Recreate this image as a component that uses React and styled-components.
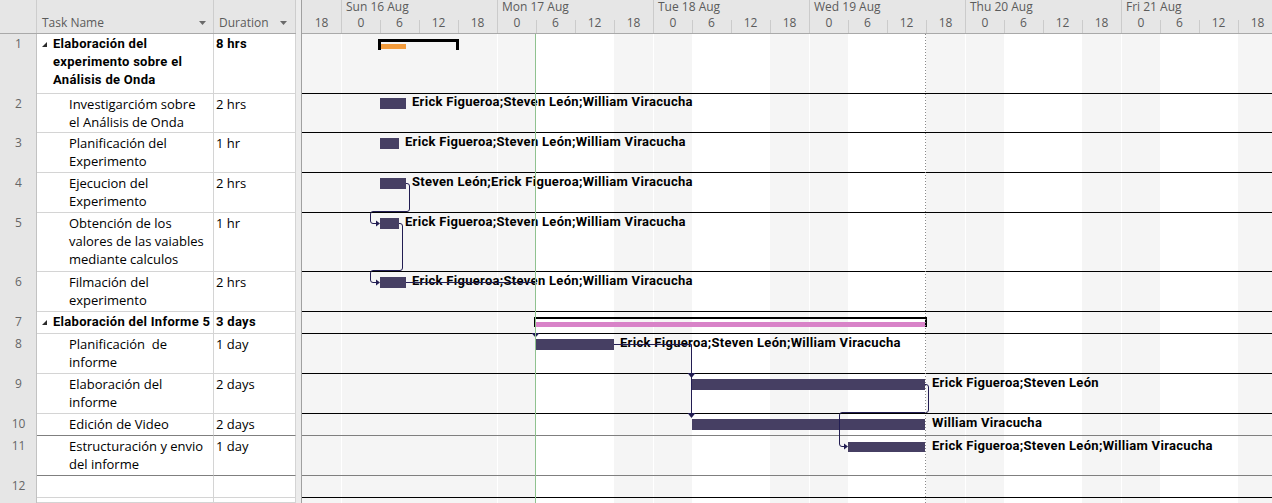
import React from 'react';
import styled, { createGlobalStyle, css } from 'styled-components';

const GlobalStyle = createGlobalStyle`
  html, body {
    margin: 0;
    padding: 0;
    background: #ffffff;
  }
  body {
    font-family: "Open Sans", "Noto Sans", sans-serif;
    font-size: 13px;
    color: #000;
    overflow: hidden;
  }
`;

const BAR = '#463f63';
const LINK = '#221d52';
const EVERYONE = 'Erick Figueroa;Steven León;William Viracucha';

const TASKS = [
  {
    n: 1, h: 60, summary: true, dur: '8 hrs',
    name: ['Elaboración del', 'experimento sobre el', 'Análisis de Onda'],
    bracket: { left: 76, top: 5, width: 81, height: 11, line: 3, fill: { top: 2, width: 25, color: '#f29b3c' } },
  },
  { n: 2, h: 39, dur: '2 hrs', name: ['Investigarcióm sobre', 'el Análisis de Onda'], bar: { left: 78, top: 4, width: 26 }, label: { text: EVERYONE, left: 110 } },
  { n: 3, h: 40, dur: '1 hr', name: ['Planificación del', 'Experimento'], bar: { left: 78, top: 5, width: 19 }, label: { text: EVERYONE, left: 103 } },
  { n: 4, h: 40, dur: '2 hrs', name: ['Ejecucion del', 'Experimento'], bar: { left: 78, top: 5, width: 26 }, label: { text: 'Steven León;Erick Figueroa;William Viracucha', left: 110 } },
  { n: 5, h: 59, dur: '1 hr', name: ['Obtención de los', 'valores de las vaiables', 'mediante calculos'], bar: { left: 78, top: 5, width: 19 }, label: { text: EVERYONE, left: 103 } },
  { n: 6, h: 40, dur: '2 hrs', name: ['Filmación del', 'experimento'], bar: { left: 78, top: 5, width: 26 }, label: { text: EVERYONE, left: 110 } },
  {
    n: 7, h: 22, summary: true, dur: '3 days',
    name: ['Elaboración del Informe 5'],
    bracket: { left: 232, top: 5, width: 393, height: 10, line: 2, fill: { top: 3, color: '#d883c8' } },
  },
  { n: 8, h: 40, dur: '1 day', name: ['Planificación  de', 'informe'], bar: { left: 234, top: 5, width: 78 }, label: { text: EVERYONE, left: 318 } },
  { n: 9, h: 40, dur: '2 days', name: ['Elaboración del', 'informe'], bar: { left: 389, top: 5, width: 234 }, label: { text: 'Erick Figueroa;Steven León', left: 630 } },
  { n: 10, h: 22, dur: '2 days', dark: true, name: ['Edición de Video'], bar: { left: 390, top: 5, width: 233 }, label: { text: 'William Viracucha', left: 630 } },
  { n: 11, h: 40, dur: '1 day', dark: true, name: ['Estructuración y envio', 'del informe'], bar: { left: 546, top: 6, width: 77, height: 10 }, label: { text: EVERYONE, left: 630 } },
  { n: 12, h: 22, dur: '', name: [] },
];

const DAYS = [
  { label: '', width: 39, edge: false },
  { label: 'Sun 16 Aug', width: 156, edge: true },
  { label: 'Mon 17 Aug', width: 156, edge: true },
  { label: 'Tue 18 Aug', width: 156, edge: true },
  { label: 'Wed 19 Aug', width: 156, edge: true },
  { label: 'Thu 20 Aug', width: 156, edge: true },
  { label: 'Fri 21 Aug', width: 156, edge: true },
];

const SLOTS = Array.from({ length: 25 }, (_, i) => {
  const hour = (18 + 6 * i) % 24;
  const day = Math.floor((i + 3) / 4);
  return { hour, dayStart: hour === 0, shaded: day <= 1 || hour === 0 || hour === 18 };
});

const Screen = styled.div`
  display: flex;
  width: 1272px;
  height: 503px;
  overflow: hidden;
`;

const Sheet = styled.div`
  width: 296px;
  flex: none;
  display: flex;
  flex-direction: column;
`;

const columns = css`
  display: grid;
  grid-template-columns: 37px 177px 82px;
`;

const HeadRow = styled.div`
  ${columns}
  height: 34px;
  box-sizing: border-box;
  background: #e6e6e6;
  border-bottom: 1px solid #a9a9a9;
`;

const HeadCell = styled.div`
  display: flex;
  align-items: center;
  justify-content: space-between;
  box-sizing: border-box;
  border-right: 1px solid #cdcdcd;
  padding: 13px ${(p) => p.$pr || 0}px 0 5px;
  font-size: 12px;
  color: #5b5b5b;
  line-height: 14px;
`;

const SortArrow = () => (
  <svg width="7" height="4" viewBox="0 0 7 4">
    <polygon points="0,0 7,0 3.5,4" fill="#6a6a6a" />
  </svg>
);

const BodyRow = styled.div`
  ${columns}
  height: ${(p) => p.$h}px;
  flex: ${(p) => (p.$fill ? 1 : 'none')};
`;

const NumCell = styled.div`
  background: #e6e6e6;
  border-right: 1px solid #c2c2c2;
  box-sizing: border-box;
  text-align: center;
  padding: 1px 0 0 1px;
  font-size: 12px;
  line-height: 18px;
  color: #666;
`;

const cellBase = css`
  box-sizing: border-box;
  border-bottom: 1px solid ${(p) => (p.$dark ? '#7f7f7f' : '#d4d4d4')};
  border-right: 1px solid #d4d4d4;
  padding-top: 1px;
  line-height: 18px;
  white-space: pre;
  overflow: hidden;
  ${(p) =>
    p.$bold &&
    css`
      font-family: Roboto, "Open Sans", sans-serif;
      font-weight: 700;
      letter-spacing: 0.3px;
    `}
`;

const NameCell = styled.div`
  ${cellBase}
  padding-left: ${(p) => (p.$bold ? 5 : 32)}px;
`;

const DurCell = styled.div`
  ${cellBase}
  padding-left: 2px;
`;

const Line = styled.div`
  display: flex;
  align-items: center;
`;

const Collapse = styled.svg`
  flex: none;
  margin: 1px 6px 0 0;
`;

const Splitter = styled.div`
  width: 6px;
  flex: none;
  box-sizing: border-box;
  background: #ececec;
  border-right: 1px solid #a0a0a0;
`;

const Gantt = styled.div`
  flex: 1;
  display: flex;
  flex-direction: column;
  overflow: hidden;
`;

const Timescale = styled.div`
  height: 34px;
  flex: none;
  box-sizing: border-box;
  background: #e6e6e6;
  border-bottom: 1px solid #a9a9a9;
  color: #5b5b5b;
  font-size: 12px;
  line-height: 14px;
  white-space: nowrap;
`;

const Tier = styled.div`
  display: flex;
  height: ${(p) => p.$h}px;
`;

const DayLabel = styled.div`
  flex: none;
  width: ${(p) => p.$w}px;
  box-sizing: border-box;
  padding-left: 4px;
  border-left: ${(p) => (p.$edge ? '1px solid #cbcbcb' : 'none')};
`;

const HourCell = styled.div`
  flex: none;
  width: 39px;
  box-sizing: border-box;
  position: relative;
  text-align: center;
  padding-top: 1px;
  border-left: ${(p) => (p.$dayStart ? '1px solid #cbcbcb' : 'none')};
  ${(p) =>
    !p.$dayStart &&
    !p.$first &&
    css`
      &::before {
        content: '';
        position: absolute;
        left: 0;
        top: 5px;
        bottom: 0;
        width: 1px;
        background: #cbcbcb;
      }
    `}
`;

const Chart = styled.div`
  flex: 1;
  position: relative;
  display: flex;
  flex-direction: column;
`;

const Shading = styled.div`
  position: absolute;
  inset: 0;
  display: flex;
  z-index: 0;
`;

const ShadeCol = styled.div`
  flex: none;
  width: 39px;
  box-sizing: border-box;
  background: ${(p) => (p.$shaded ? '#f5f5f5' : '#ffffff')};
  border-left: ${(p) => (p.$dayStart ? '1px solid #ffffff' : 'none')};
`;

const ChartRow = styled.div`
  position: relative;
  z-index: 1;
  box-sizing: border-box;
  height: ${(p) => p.$h}px;
  flex: ${(p) => (p.$fill ? 1 : 'none')};
  border-bottom: ${(p) => (p.$fill ? 'none' : `1px solid ${p.$dark ? '#7f7f7f' : '#000'}`)};
`;

const TaskBar = styled.div`
  position: absolute;
  background: ${BAR};
`;

const Bracket = styled.div`
  position: absolute;
  box-sizing: border-box;
  border: ${(p) => p.$line}px solid #000;
  border-bottom: none;
`;

const Progress = styled.div`
  position: absolute;
  left: 0;
  height: 5px;
  background: ${(p) => p.$color};
`;

const Label = styled.div`
  position: absolute;
  font-family: Roboto, "Open Sans", sans-serif;
  font-weight: 700;
  font-size: 13px;
  letter-spacing: 0.3px;
  line-height: 18px;
  white-space: nowrap;
  color: #000;
`;

const Links = styled.svg`
  position: absolute;
  left: 0;
  top: 0;
  z-index: 2;
  pointer-events: none;
`;

function LinkLayer() {
  const stroke = { fill: 'none', stroke: LINK, strokeWidth: 1 };
  return (
    <Links width="970" height="469" viewBox="302 34 970 469">
      <path {...stroke} d="M406 183.5 H407 Q409.5 183.5 409.5 186 V209 Q409.5 211.5 407 211.5 H373 Q370.5 211.5 370.5 214 V221 Q370.5 223.5 373 223.5 H376" />
      <polygon points="376,220.5 380,223.5 376,226.5" fill={LINK} />
      <path {...stroke} d="M399 223.5 H400 Q402.5 223.5 402.5 226 V268 Q402.5 270.5 400 270.5 H373 Q370.5 270.5 370.5 273 V280 Q370.5 282.5 373 282.5 H376" />
      <polygon points="376,279.5 380,282.5 376,285.5" fill={LINK} />
      <path {...stroke} d="M406 282.5 H535.5 V333" />
      <polygon points="531.5,333 539.5,333 535.5,337.5" fill={LINK} />
      <path {...stroke} d="M614 344.5 H691.5 V414" />
      <polygon points="687.5,373 695.5,373 691.5,378" fill={LINK} />
      <polygon points="687.5,413 695.5,413 691.5,418" fill={LINK} />
      <path {...stroke} d="M925 384.5 H926 Q928.5 384.5 928.5 387 V410 Q928.5 412.5 926 412.5 H842 Q839.5 412.5 839.5 415 V444 Q839.5 446.5 842 446.5 H844" />
      <polygon points="844,443.5 848,446.5 844,449.5" fill={LINK} />
      <line x1="535.5" y1="34" x2="535.5" y2="503" stroke="#8fc28f" strokeWidth="1" />
      <line x1="925.5" y1="34" x2="925.5" y2="503" stroke="#8a8a8a" strokeWidth="1" strokeDasharray="1 2" />
    </Links>
  );
}

function TaskName({ task }) {
  if (!task.summary) return task.name.map((l) => <div key={l}>{l}</div>);
  return task.name.map((l, i) => (
    <Line key={l} style={{ paddingLeft: i === 0 ? 0 : 11 }}>
      {i === 0 && (
        <Collapse width="5" height="5" viewBox="0 0 5 5">
          <polygon points="5,0 5,5 0,5" fill="#2b2b2b" />
        </Collapse>
      )}
      {l}
    </Line>
  ));
}

function ChartContent({ task }) {
  const { bar, label, bracket } = task;
  return (
    <>
      {bracket && (
        <Bracket
          $line={bracket.line}
          style={{ left: bracket.left, top: bracket.top, width: bracket.width, height: bracket.height }}
        >
          <Progress
            $color={bracket.fill.color}
            style={{ top: bracket.fill.top, width: bracket.fill.width ?? '100%' }}
          />
        </Bracket>
      )}
      {bar && <TaskBar style={{ left: bar.left, top: bar.top, width: bar.width, height: bar.height || 11 }} />}
      {label && <Label style={{ left: label.left, top: bar.top - 5 }}>{label.text}</Label>}
    </>
  );
}

export default function App() {
  return (
    <>
      <GlobalStyle />
      <Screen>
        <Sheet>
          <HeadRow>
            <HeadCell />
            <HeadCell $pr={7}>
              Task Name <SortArrow />
            </HeadCell>
            <HeadCell $pr={8}>
              Duration <SortArrow />
            </HeadCell>
          </HeadRow>
          {TASKS.map((t) => (
            <BodyRow key={t.n} $h={t.h}>
              <NumCell>{t.n}</NumCell>
              <NameCell $bold={t.summary} $dark={t.dark}>
                <TaskName task={t} />
              </NameCell>
              <DurCell $bold={t.summary} $dark={t.dark}>
                {t.dur}
              </DurCell>
            </BodyRow>
          ))}
          <BodyRow $fill>
            <NumCell />
            <NameCell />
            <DurCell />
          </BodyRow>
        </Sheet>
        <Splitter />
        <Gantt>
          <Timescale>
            <Tier $h={15}>
              {DAYS.map((d, i) => (
                <DayLabel key={i} $w={d.width} $edge={d.edge}>
                  {d.label}
                </DayLabel>
              ))}
            </Tier>
            <Tier $h={18}>
              {SLOTS.map((s, i) => (
                <HourCell key={i} $dayStart={s.dayStart} $first={i === 0}>
                  {s.hour}
                </HourCell>
              ))}
            </Tier>
          </Timescale>
          <Chart>
            <Shading>
              {SLOTS.map((s, i) => (
                <ShadeCol key={i} $shaded={s.shaded} $dayStart={s.dayStart} />
              ))}
            </Shading>
            {TASKS.map((t) => (
              <ChartRow key={t.n} $h={t.h} $dark={t.dark}>
                <ChartContent task={t} />
              </ChartRow>
            ))}
            <ChartRow $fill />
            <LinkLayer />
          </Chart>
        </Gantt>
      </Screen>
    </>
  );
}
